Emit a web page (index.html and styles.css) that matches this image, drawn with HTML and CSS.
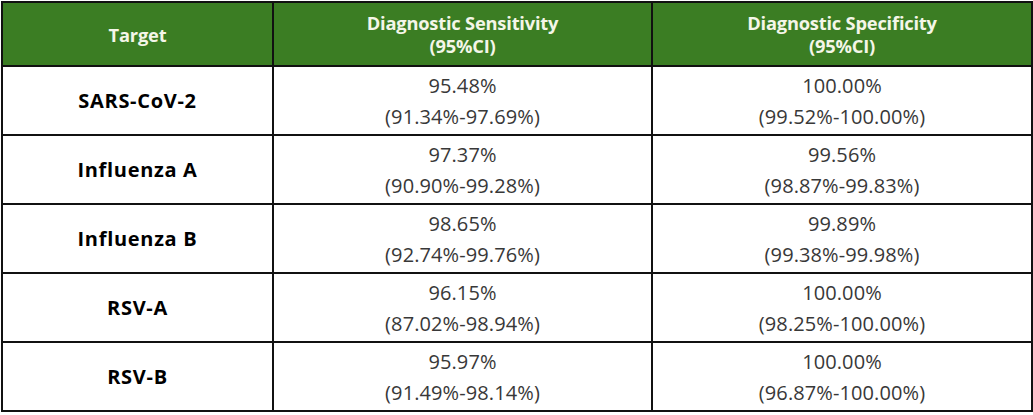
FILE: index.html
```html
<!DOCTYPE html>
<html>
<head>
<meta charset="utf-8">
<link rel="stylesheet" href="styles.css">
</head>
<body>
<table class="perf">
  <colgroup>
    <col class="c1"><col class="c2"><col class="c3">
  </colgroup>
  <thead>
    <tr>
      <th>Target</th>
      <th>Diagnostic Sensitivity<br>(95%CI)</th>
      <th>Diagnostic Specificity<br>(95%CI)</th>
    </tr>
  </thead>
  <tbody>
    <tr><td class="name">SARS-CoV-2</td><td>95.48%<br>(91.34%-97.69%)</td><td>100.00%<br>(99.52%-100.00%)</td></tr>
    <tr><td class="name">Influenza A</td><td>97.37%<br>(90.90%-99.28%)</td><td>99.56%<br>(98.87%-99.83%)</td></tr>
    <tr><td class="name">Influenza B</td><td>98.65%<br>(92.74%-99.76%)</td><td>99.89%<br>(99.38%-99.98%)</td></tr>
    <tr><td class="name">RSV-A</td><td>96.15%<br>(87.02%-98.94%)</td><td>100.00%<br>(98.25%-100.00%)</td></tr>
    <tr><td class="name">RSV-B</td><td>95.97%<br>(91.49%-98.14%)</td><td>100.00%<br>(96.87%-100.00%)</td></tr>
  </tbody>
</table>
</body>
</html>
```
FILE: styles.css
```css
html, body {
  margin: 0;
  padding: 0;
  background: #ffffff;
}
body {
  padding: 1px 0 0 1px;
  font-family: "Open Sans", "Noto Sans", sans-serif;
}
.perf {
  border-collapse: collapse;
  width: 1030px;
  table-layout: fixed;
}
.c1 { width: 271px; }
.c2 { width: 379px; }
.c3 { width: 380px; }
.perf th, .perf td {
  border: 2px solid #111111;
  text-align: center;
  vertical-align: middle;
  padding: 0;
}
.perf th {
  background: #3b7d23;
  color: #f4f6e8;
  font-size: 18.3px;
  font-weight: 700;
  line-height: 23px;
  height: 62px;
  letter-spacing: -0.2px;
}
.perf td {
  color: #383838;
  font-size: 20px;
  line-height: 31px;
  height: 67px;
  letter-spacing: 0.1px;
}
.perf td.name {
  color: #000000;
  font-weight: 700;
  font-size: 20px;
  letter-spacing: 0.7px;
}
```
